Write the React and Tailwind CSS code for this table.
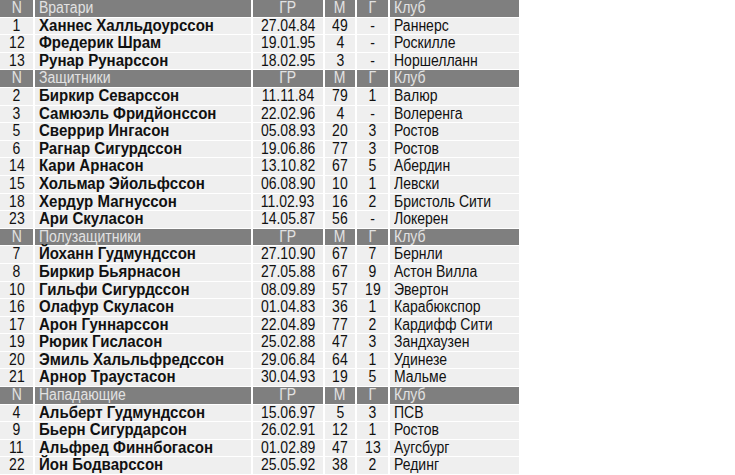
import React from "react";

const groups = [
  {
    title: "Вратари",
    rows: [
      ["1", "Ханнес Халльдоурссон", "27.04.84", "49", "-", "Раннерс"],
      ["12", "Фредерик Шрам", "19.01.95", "4", "-", "Роскилле"],
      ["13", "Рунар Рунарссон", "18.02.95", "3", "-", "Норшелланн"],
    ],
  },
  {
    title: "Защитники",
    rows: [
      ["2", "Биркир Севарссон", "11.11.84", "79", "1", "Валюр"],
      ["3", "Самюэль Фридйонссон", "22.02.96", "4", "-", "Волеренга"],
      ["5", "Сверрир Ингасон", "05.08.93", "20", "3", "Ростов"],
      ["6", "Рагнар Сигурдссон", "19.06.86", "77", "3", "Ростов"],
      ["14", "Кари Арнасон", "13.10.82", "67", "5", "Абердин"],
      ["15", "Хольмар Эйольфссон", "06.08.90", "10", "1", "Левски"],
      ["18", "Хердур Магнуссон", "11.02.93", "16", "2", "Бристоль Сити"],
      ["23", "Ари Скуласон", "14.05.87", "56", "-", "Локерен"],
    ],
  },
  {
    title: "Полузащитники",
    rows: [
      ["7", "Йоханн Гудмундссон", "27.10.90", "67", "7", "Бернли"],
      ["8", "Биркир Бьярнасон", "27.05.88", "67", "9", "Астон Вилла"],
      ["10", "Гильфи Сигурдссон", "08.09.89", "57", "19", "Эвертон"],
      ["16", "Олафур Скуласон", "01.04.83", "36", "1", "Карабюкспор"],
      ["17", "Арон Гуннарссон", "22.04.89", "77", "2", "Кардифф Сити"],
      ["19", "Рюрик Гисласон", "25.02.88", "47", "3", "Зандхаузен"],
      ["20", "Эмиль Хальльфредссон", "29.06.84", "64", "1", "Удинезе"],
      ["21", "Арнор Траустасон", "30.04.93", "19", "5", "Мальме"],
    ],
  },
  {
    title: "Нападающие",
    rows: [
      ["4", "Альберт Гудмундссон", "15.06.97", "5", "3", "ПСВ"],
      ["9", "Бьерн Сигурдарсон", "26.02.91", "12", "1", "Ростов"],
      ["11", "Альфред Финнбогасон", "01.02.89", "47", "13", "Аугсбург"],
      ["22", "Йон Бодварссон", "25.05.92", "38", "2", "Рединг"],
    ],
  },
];

const H = "leading-[16.6px] bg-[#7f7f7f] text-[#e2e2e2] whitespace-nowrap";
const D = "leading-[16.6px] bg-[#efefef] text-[#111] whitespace-nowrap";
const TL = "inline-block origin-left scale-x-[0.875]";
const TC = "inline-block origin-center scale-x-[0.875]";
const TB = "inline-block origin-left scale-x-[0.94]";

export default function App() {
  return (
    <div className="w-[735px] h-[475px] bg-white overflow-hidden" style={{ fontFamily: '"Liberation Sans", Arial, sans-serif' }}>
      <div className="grid grid-cols-[33px_216px_70px_30px_31px_129px] auto-rows-[16.6px] gap-x-[2px] gap-y-px w-[519px] text-[16px]">
        {groups.map((g) => (
          <React.Fragment key={g.title}>
            <div className={`${H} text-center`}><span className={TC}>N</span></div>
            <div className={`${H} pl-1`}><span className={TL}>{g.title}</span></div>
            <div className={`${H} text-center`}><span className={TC}>ГР</span></div>
            <div className={`${H} text-center`}><span className={TC}>М</span></div>
            <div className={`${H} text-center`}><span className={TC}>Г</span></div>
            <div className={`${H} pl-1`}><span className={TL}>Клуб</span></div>
            {g.rows.map((r) => (
              <React.Fragment key={r[0]}>
                <div className={`${D} text-center`}><span className={TC}>{r[0]}</span></div>
                <div className={`${D} pl-1 font-bold`}><span className={TB}>{r[1]}</span></div>
                <div className={`${D} text-center`}><span className={TC}>{r[2]}</span></div>
                <div className={`${D} text-center`}><span className={TC}>{r[3]}</span></div>
                <div className={`${D} text-center`}><span className={TC}>{r[4]}</span></div>
                <div className={`${D} pl-1`}><span className={TL}>{r[5]}</span></div>
              </React.Fragment>
            ))}
          </React.Fragment>
        ))}
      </div>
    </div>
  );
}
